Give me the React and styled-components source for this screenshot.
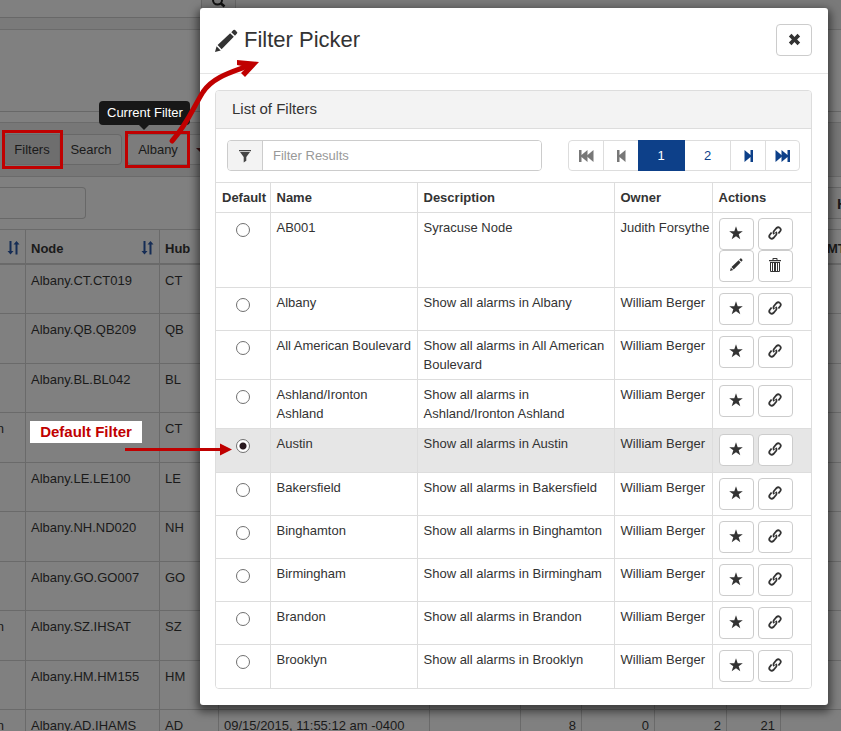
import React from "react";
import styled, { createGlobalStyle, css } from "styled-components";

const Global = createGlobalStyle`
  * { box-sizing: border-box; }
  html, body { margin: 0; height: 100%; }
  body {
    overflow: hidden;
    background: #808080;
    color: #333;
    font: 13px/19px "Liberation Sans", Arial, sans-serif;
  }
  #root { height: 100%; }
  button, input { font: inherit; color: inherit; }
  button { cursor: pointer; }
  table { border-collapse: collapse; }
`;

const Screen = styled.div`
  position: relative;
  height: 100%;
  overflow: hidden;
`;

/* ---------- dimmed page ---------- */

const Page = styled.div`
  height: 100%;
  overflow: hidden;
  color: #1a1a1a;
`;

const TopBar = styled.div`
  display: flex;
  height: 30px;
  background: #7a7a7a;
  border-bottom: 1px solid #6b6b6b;
`;

const SearchBox = styled.input`
  width: 201px;
  height: 18px;
  padding: 0 8px;
  border: 0;
  border-bottom: 1px solid #686868;
  background: #808080;
`;

const SearchButton = styled.button`
  display: flex;
  justify-content: center;
  width: 35px;
  height: 18px;
  padding: 0;
  border: 1px solid #666;
  border-top: 0;
  background: #777;
  color: #111;
`;

const Summary = styled.div`
  height: 82px;
  border-bottom: 1px solid #686868;
`;

const ToolPanel = styled.div`
  display: flex;
  align-items: center;
  height: 55px;
  margin-top: 10px;
  padding-left: 4px;
  background: #777;
  border: solid #6b6b6b;
  border-width: 1px 0;
`;

const ToolButton = styled.button`
  height: 31px;
  width: ${(p) => p.$width}px;
  margin-right: ${(p) => p.$gap || 0}px;
  padding: 0;
  border: 1px solid #686868;
  border-radius: ${(p) => p.$radius || "4px"};
  background: ${(p) => (p.$active ? "#6e6e6e" : "#7c7c7c")};
  color: #1a1a1a;
`;

const Caret = styled.span`
  display: block;
  width: 8px;
  margin-left: 6px;
  border: 4px solid transparent;
  border-top-color: #3d1010;
  border-bottom: 0;
`;

const FieldRow = styled.div`
  display: flex;
  justify-content: space-between;
  height: 52px;
  padding-top: 10px;
`;

const PageField = styled.input`
  width: 86px;
  height: 32px;
  padding: 0 8px;
  border: 1px solid #686868;
  border-left: 0;
  border-radius: 0 4px 4px 0;
  background: #808080;
`;

const PageButton = styled.button`
  width: 16px;
  height: 32px;
  padding: 0 0 0 12px;
  overflow: hidden;
  border: solid #686868;
  border-width: 1px 0;
  background: #7c7c7c;
  font-weight: bold;
  font-size: 15px;
`;

const AlarmTable = styled.table`
  width: 100%;
  table-layout: fixed;
  border-collapse: separate;
  border-spacing: 0;
`;

const AlarmHead = styled.th`
  height: 36px;
  padding: 3px 5px 0;
  border: solid #6a6a6a;
  border-width: 1px 1px 2px 0;
  text-align: left;
  white-space: nowrap;
  overflow: hidden;
  &:last-child { padding-left: 46px; padding-right: 0; border-right: 0; }
`;

const HeadLine = styled.span`
  display: flex;
  justify-content: space-between;
  align-items: center;
`;

const AlarmCell = styled.td`
  height: ${(p) => (p.$tall ? 50 : 49)}px;
  padding: 6px 5px 0;
  border: solid #6a6a6a;
  border-width: 0 1px 1px 0;
  vertical-align: top;
  text-align: ${(p) => (p.$right ? "right" : "left")};
  white-space: nowrap;
  &:first-child { padding: 6px 22px 0 0; direction: rtl; }
  &:last-child { border-right: 0; }
`;

/* ---------- modal ---------- */

const Modal = styled.section`
  position: absolute;
  top: 8px;
  left: 200px;
  right: 13px;
  background: #fff;
  border-radius: 3px;
  box-shadow: 0 4px 9px 3px rgba(0, 0, 0, 0.5);
`;

const ModalHeader = styled.header`
  display: flex;
  justify-content: space-between;
  align-items: flex-start;
  height: 66px;
  padding: 16px 16px 0 15px;
  border-bottom: 1px solid #e5e5e5;
`;

const Title = styled.h1`
  display: flex;
  align-items: center;
  gap: 6px;
  margin: 0;
  font-size: 22px;
  font-weight: normal;
  line-height: 32px;
`;

const CloseButton = styled.button`
  display: grid;
  place-items: center;
  width: 36px;
  height: 32px;
  padding: 0 0 2px;
  border: 1px solid #ccc;
  border-radius: 4px;
  background: #fff;
`;

const ModalBody = styled.div`
  padding: 16px 16px 16px 15px;
`;

const Panel = styled.div`
  border: 1px solid #ddd;
  border-radius: 4px;
  overflow: hidden;
`;

const PanelHeading = styled.h2`
  margin: 0;
  padding: 8px 16px 9px;
  background: #f3f3f3;
  border-bottom: 1px solid #ddd;
  font-size: 15px;
  font-weight: normal;
  line-height: 20px;
`;

const FilterBar = styled.div`
  display: flex;
  justify-content: space-between;
  padding: 11px;
`;

const InputGroup = styled.label`
  display: flex;
  flex: 0 1 315px;
  height: 31px;
  border: 1px solid #ccc;
  border-radius: 4px;
  overflow: hidden;
`;

const Addon = styled.span`
  display: grid;
  place-items: center;
  flex: 0 0 35px;
  background: #f3f3f3;
  border-right: 1px solid #ccc;
`;

const FilterInput = styled.input`
  flex: 1;
  min-width: 0;
  padding: 0 10px;
  border: 0;
  outline: 0;
  background: #fff;
  &::placeholder { color: #999; opacity: 1; }
`;

const Pager = styled.nav`
  display: flex;
  height: 31px;
  border: 1px solid #ddd;
  border-radius: 4px;
`;

const PageLink = styled.button`
  display: grid;
  place-items: center;
  width: ${(p) => (p.$number ? 46 : 35)}px;
  padding: 0;
  border: 0;
  border-right: 1px solid #ddd;
  background: transparent;
  color: ${(p) => (p.$muted ? "#777" : "#0d4089")};
  &:last-child { border-right: 0; width: 33px; }
  ${(p) =>
    p.$current &&
    css`
      width: 47px;
      margin: -1px 0 -1px -1px;
      background: #0d4089;
      border-color: #0d4089;
      color: #fff;
    `}
`;

const FilterTable = styled.table`
  width: 100%;
  table-layout: fixed;
`;

const HeadCell = styled.th`
  height: 30px;
  padding: 0 0 0 6px;
  border: 1px solid #ddd;
  text-align: left;
  white-space: nowrap;
  &:first-child { border-left: 0; }
  &:last-child { border-right: 0; }
`;

const Row = styled.tr`
  height: ${(p) => (p.$selected ? 44 : 43)}px;
  background: ${(p) => (p.$selected ? "#e6e6e6" : "#fff")};
`;

const Cell = styled.td`
  padding: 5px 4px 5px 6px;
  border: 1px solid #ddd;
  vertical-align: top;
  &:first-child { border-left: 0; }
  &:last-child { border-right: 0; }
  tr:last-child > & { border-bottom: 0; }
`;

const NoWrap = styled.span`
  white-space: nowrap;
`;

const Radio = styled.input`
  appearance: none;
  display: block;
  width: 14px;
  height: 14px;
  margin: 5px 0 0 14px;
  border: 1px solid #707070;
  border-radius: 50%;
  background: #fff;
  &:checked {
    background: radial-gradient(circle, #2a1a20 0 3px, #fff 4px);
  }
`;

const Actions = styled.div`
  display: grid;
  grid-template-columns: 35px 35px;
  column-gap: 4px;
`;

const ActionButton = styled.button`
  display: grid;
  place-items: center;
  height: 32px;
  padding: 0 0 3px;
  border: 1px solid #ccc;
  border-radius: 4px;
  background: #fff;
`;

/* ---------- annotations ---------- */

const RedFrame = styled.div`
  position: absolute;
  top: ${(p) => p.$top}px;
  left: ${(p) => p.$left}px;
  width: ${(p) => p.$width}px;
  height: ${(p) => p.$height}px;
  border: 3px solid #c00000;
`;

const Tooltip = styled.div`
  position: absolute;
  top: 101px;
  left: 99px;
  padding: 2px 7px 2px 8px;
  border-radius: 4px;
  background: #171717;
  color: #fff;
  line-height: 20px;
  white-space: nowrap;
  &::after {
    content: "";
    position: absolute;
    top: 100%;
    left: 40px;
    border: 5px solid transparent;
    border-top-color: #171717;
    border-bottom: 0;
  }
`;

const Callout = styled.div`
  position: absolute;
  top: 421px;
  left: 30px;
  width: 112px;
  background: #fff;
  color: #c00000;
  font-size: 15px;
  font-weight: bold;
  line-height: 22px;
  text-align: center;
`;

const Arrows = styled.svg`
  position: absolute;
  top: 0;
  left: 0;
  pointer-events: none;
`;

/* ---------- icons ---------- */

const Svg = ({ w = 14, h = 14, box = "0 0 14 14", children }) => (
  <svg width={w} height={h} viewBox={box} fill="currentColor" aria-hidden="true">
    {children}
  </svg>
);

const PencilIcon = ({ size = 14 }) => (
  <Svg w={size} h={size} box="0 0 22 22">
    <path d="M0 22l1.500-5.500 4 4zM2.500 15.200L14.500 4l3.500 3.500L6.300 19.300zM15.600 3L17.600 1q.8-.8 1.600 0l1.800 1.800q.8.8 0 1.600l-1.900 2z" />
  </Svg>
);

const StarIcon = () => (
  <Svg>
    <path d="M7 .3l1.700 4.900h5.100L9.700 8.200l1.600 5L7 10.200l-4.300 3 1.600-5L.2 5.200h5.100z" />
  </Svg>
);

const LinkIcon = () => (
  <Svg>
    <g fill="none" stroke="currentColor" strokeWidth="1.800">
      <path d="M6.300 8.200Q4.800 6.600 6 5L8.600 2Q10.100.6 11.800 1.900T12.300 5.100L10.400 7.500" />
      <path d="M7.700 5.800Q9.200 7.400 8 9L5.400 12Q3.900 13.400 2.200 12.100T1.700 8.900L3.600 6.500" />
    </g>
  </Svg>
);

const TrashIcon = () => (
  <Svg>
    <path d="M1 2h3.500V.8q0-.8.800-.8h3.400q.8 0 .8.800V2H13v1.300H1zM5.500 1v1h3V1z" fillRule="evenodd" />
    <path d="M2 4h10v9q0 1-1 1H3q-1 0-1-1zM3 5v8h1V5zM5 5v8h1V5zM8 5v8h1V5zM10 5v8h1V5z" fillRule="evenodd" />
  </Svg>
);

const FunnelIcon = () => (
  <Svg>
    <path d="M1 1h12v1.300H1zM2 3h10L8.300 8v3.800L5.700 13.500V8z" fill="#444" />
  </Svg>
);

const CloseIcon = () => (
  <Svg w={13} h={13} box="0 0 12 12">
    <path d="M3.200.8L6 3.600 8.800.8l2.400 2.400L8.400 6l2.800 2.800-2.400 2.400L6 8.400l-2.800 2.800L.8 8.800 3.600 6 .8 3.200z" />
  </Svg>
);

const StepIcon = ({ double, forward }) => (
  <Svg w={double ? 15 : 9} h={12} box={double ? "0 0 15 12" : "0 0 9 12"}>
    <g transform={forward ? `matrix(-1 0 0 1 ${double ? 15 : 9} 0)` : undefined}>
      <path d="M0 0h2.500v5L8.500 0v12L2.500 7v5H0z" />
      {double && <path d="M8 5.500L14.500 0v12L8 6.500z" />}
    </g>
  </Svg>
);

const SortIcon = () => (
  <svg width="13" height="14" viewBox="0 0 13 14" fill="#152c55" aria-hidden="true">
    <path d="M2.500 0h2v10h2L3.500 13.500.5 10h2zM8.500 13.500h2v-10h2L9.500 0l-3 3.500h2z" />
  </svg>
);

const MagnifierIcon = () => (
  <svg width="14" height="14" viewBox="0 0 14 14" fill="none" stroke="currentColor" strokeWidth="2" aria-hidden="true">
    <circle cx="5.500" cy="0" r="4.500" />
    <path d="M8.500 3l4 3.500" strokeWidth="2.500" />
  </svg>
);

/* ---------- data ---------- */

const filters = [
  ["AB001", "Syracuse Node", "Judith Forsythe", true],
  ["Albany", "Show all alarms in Albany"],
  ["All American Boulevard", "Show all alarms in All American Boulevard"],
  ["Ashland/Ironton Ashland", "Show all alarms in Ashland/Ironton Ashland"],
  ["Austin", "Show all alarms in Austin"],
  ["Bakersfield", "Show all alarms in Bakersfield"],
  ["Binghamton", "Show all alarms in Binghamton"],
  ["Birmingham", "Show all alarms in Birmingham"],
  ["Brandon", "Show all alarms in Brandon"],
  ["Brooklyn", "Show all alarms in Brooklyn"],
];

const alarms = [
  ["", "Albany.CT.CT019", "CT"],
  ["", "Albany.QB.QB209", "QB"],
  ["", "Albany.BL.BL042", "BL"],
  ["n", "", "CT"],
  ["", "Albany.LE.LE100", "LE"],
  ["", "Albany.NH.ND020", "NH"],
  ["", "Albany.GO.GO007", "GO"],
  ["n", "Albany.SZ.IHSAT", "SZ"],
  ["", "Albany.HM.HM155", "HM"],
  ["n", "Albany.AD.IHAMS", "AD", "09/15/2015, 11:55:12 am -0400", "", "8", "0", "2", "21"],
];

const Columns = ({ widths }) => (
  <colgroup>
    {widths.map((w, i) => (
      <col key={i} width={w} />
    ))}
  </colgroup>
);

function AlarmPage() {
  return (
    <Page>
      <TopBar>
        <SearchBox aria-label="Search" />
        <SearchButton aria-label="Run search"><MagnifierIcon /></SearchButton>
      </TopBar>
      <Summary />
      <ToolPanel>
        <ToolButton $active $width={56} $radius="4px 0 0 4px">Filters</ToolButton>
        <ToolButton $width={62} $gap={5} $radius="0 4px 4px 0">Search</ToolButton>
        <ToolButton $width={62} $radius="4px 0 0 4px">Albany</ToolButton>
        <ToolButton $width={24} $radius="0 4px 4px 0" aria-label="Choose filter"><Caret /></ToolButton>
      </ToolPanel>
      <FieldRow>
        <PageField aria-label="Filter alarms" />
        <PageButton>H</PageButton>
      </FieldRow>
      <AlarmTable>
        <Columns widths={[26, 134, 59, 211, 91, 61, 73, 72, 54, undefined]} />
        <thead>
          <tr>
            <AlarmHead><HeadLine><span /><SortIcon /></HeadLine></AlarmHead>
            <AlarmHead><HeadLine>Node<SortIcon /></HeadLine></AlarmHead>
            <AlarmHead>Hub</AlarmHead>
            {[3, 4, 5, 6, 7, 8].map((n) => <AlarmHead key={n} />)}
            <AlarmHead>MT</AlarmHead>
          </tr>
        </thead>
        <tbody>
          {alarms.map((row, i) => (
            <tr key={i}>
              {Array.from({ length: 10 }, (_, c) => (
                <AlarmCell key={c} $tall={i % 2 === 1} $right={c === 0 || c > 4}>
                  {row[c]}
                </AlarmCell>
              ))}
            </tr>
          ))}
        </tbody>
      </AlarmTable>
    </Page>
  );
}

function FilterPicker() {
  return (
    <Modal role="dialog" aria-labelledby="picker-title">
      <ModalHeader>
        <Title id="picker-title"><PencilIcon size={23} />Filter Picker</Title>
        <CloseButton aria-label="Close"><CloseIcon /></CloseButton>
      </ModalHeader>
      <ModalBody>
        <Panel>
          <PanelHeading>List of Filters</PanelHeading>
          <FilterBar>
            <InputGroup>
              <Addon><FunnelIcon /></Addon>
              <FilterInput placeholder="Filter Results" aria-label="Filter Results" />
            </InputGroup>
            <Pager aria-label="Pages">
              <PageLink $muted aria-label="First page"><StepIcon double /></PageLink>
              <PageLink $muted aria-label="Previous page"><StepIcon /></PageLink>
              <PageLink $number $current>1</PageLink>
              <PageLink $number>2</PageLink>
              <PageLink aria-label="Next page"><StepIcon forward /></PageLink>
              <PageLink aria-label="Last page"><StepIcon double forward /></PageLink>
            </Pager>
          </FilterBar>
          <FilterTable>
            <Columns widths={[54, 147, 197, 98, undefined]} />
            <thead>
              <tr>
                {["Default", "Name", "Description", "Owner", "Actions"].map((t) => (
                  <HeadCell key={t}>{t}</HeadCell>
                ))}
              </tr>
            </thead>
            <tbody>
              {filters.map(([name, description, owner = "William Berger", editable]) => (
                <Row key={name} $selected={name === "Austin"}>
                  <Cell>
                    <Radio type="radio" name="default" aria-label={name} defaultChecked={name === "Austin"} />
                  </Cell>
                  <Cell>{name}</Cell>
                  <Cell>{description}</Cell>
                  <Cell><NoWrap>{owner}</NoWrap></Cell>
                  <Cell>
                    <Actions>
                      <ActionButton aria-label={`Favorite ${name}`}><StarIcon /></ActionButton>
                      <ActionButton aria-label={`Link ${name}`}><LinkIcon /></ActionButton>
                      {editable && (
                        <>
                          <ActionButton aria-label={`Edit ${name}`}><PencilIcon size={13} /></ActionButton>
                          <ActionButton aria-label={`Delete ${name}`}><TrashIcon /></ActionButton>
                        </>
                      )}
                    </Actions>
                  </Cell>
                </Row>
              ))}
            </tbody>
          </FilterTable>
        </Panel>
      </ModalBody>
    </Modal>
  );
}

export default function App() {
  return (
    <Screen>
      <Global />
      <AlarmPage />
      <FilterPicker />
      <RedFrame $top={130} $left={2} $width={61} $height={39} />
      <RedFrame $top={131} $left={125} $width={65} $height={37} />
      <Tooltip role="tooltip">Current Filter</Tooltip>
      <Callout>Default Filter</Callout>
      <Arrows width="280" height="470" viewBox="0 0 280 470" fill="none" stroke="#c00000" aria-hidden="true">
        <path d="M172 141C188 123 193 108 203 92C213 77 232 72 248 66" strokeWidth="5" strokeLinecap="round" />
        <path d="M237 60L259 62L245 77L241 73L247 67L237 65z" fill="#c00000" stroke="none" />
        <path d="M125 449.500H222" strokeWidth="3" />
        <path d="M220 443.500L232 449.500L220 455.500z" fill="#c00000" stroke="none" />
      </Arrows>
    </Screen>
  );
}
